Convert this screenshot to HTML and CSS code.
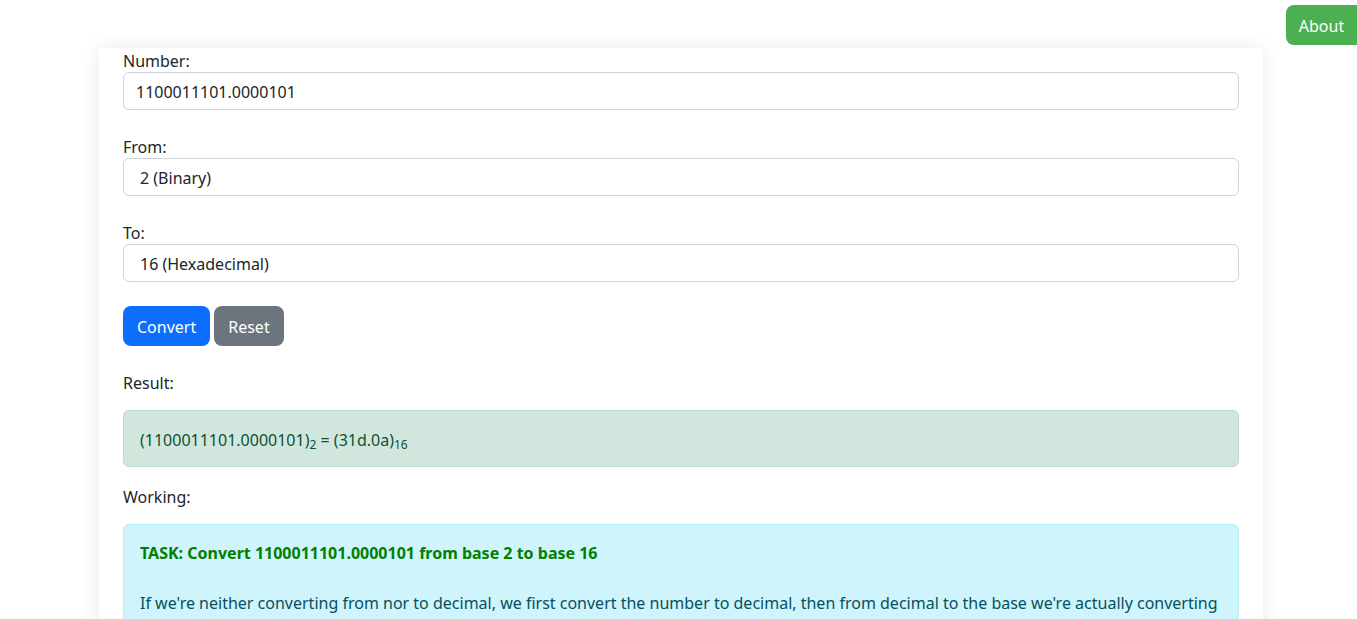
FILE: index.html
```html
<!DOCTYPE html>
<html lang="en">
<head>
<meta charset="utf-8">
<title>Base Converter</title>
<link rel="stylesheet" href="styles.css">
</head>
<body>
<header class="topbar">
  <button class="about-btn" type="button">About</button>
</header>
<main class="card">
  <div class="field">
    <label class="field-label" for="number">Number:</label>
    <input class="control" id="number" type="text" value="1100011101.0000101">
  </div>
  <div class="field">
    <label class="field-label" for="from">From:</label>
    <select class="control select" id="from">
      <option>2 (Binary)</option>
    </select>
  </div>
  <div class="field">
    <label class="field-label" for="to">To:</label>
    <select class="control select" id="to">
      <option>16 (Hexadecimal)</option>
    </select>
  </div>
  <div class="actions">
    <button class="btn btn-primary" type="button">Convert</button>
    <button class="btn btn-secondary" type="button">Reset</button>
  </div>
  <div class="section-label">Result:</div>
  <div class="alert alert-success">(1100011101.0000101)<sub>2</sub> = (31d.0a)<sub>16</sub></div>
  <div class="section-label">Working:</div>
  <div class="alert alert-info">
    <p class="task">TASK: Convert 1100011101.0000101 from base 2 to base 16</p>
    <p class="explain">If we're neither converting from nor to decimal, we first convert the number to decimal, then from decimal to the base we're actually converting to.</p>
  </div>
</main>
</body>
</html>
```

FILE: styles.css
```css
* { box-sizing: border-box; }

html, body {
  margin: 0;
  padding: 0;
  background: #ffffff;
  overflow: hidden;
}

body {
  font-family: "Noto Sans", "Open Sans", sans-serif;
  font-size: 16px;
  line-height: 24px;
  color: #212529;
}

.topbar {
  display: flex;
  justify-content: flex-end;
  padding-top: 5px;
}

.about-btn {
  height: 40px;
  width: 71px;
  border: none;
  border-radius: 8px 0 0 8px;
  background: #4caf50;
  color: #ffffff;
  font-family: inherit;
  font-size: 16px;
  line-height: 24px;
  padding: 2px 0 0;
}

.card {
  width: 1164px;
  margin: 3px 0 0 99px;
  padding: 0 24px 24px;
  background: #ffffff;
  box-shadow: 0 0 18px rgba(0, 0, 0, 0.09);
  min-height: 600px;
}

.field {
  display: flex;
  flex-direction: column;
  margin-bottom: 24px;
}

.field-label {
  display: block;
  height: 24px;
  padding-top: 1px;
}

.control {
  display: block;
  width: 100%;
  height: 38px;
  padding: 7px 12px 5px;
  border: 1px solid #ced4da;
  border-radius: 6px;
  background: #ffffff;
  font-family: inherit;
  font-size: 16px;
  line-height: 24px;
  color: #212529;
}

.select {
  appearance: none;
  -webkit-appearance: none;
  padding-left: 16px;
}

.actions {
  display: flex;
  gap: 4px;
  margin-bottom: 25px;
}

.btn {
  height: 40px;
  padding: 9px 14px 7px;
  border: none;
  border-radius: 8px;
  color: #ffffff;
  font-family: inherit;
  font-size: 16px;
  line-height: 24px;
}

.btn-primary { background: #0d6efd; }
.btn-secondary { background: #6c757d; }

.section-label {
  line-height: 24px;
  margin-bottom: 15px;
}

.alert {
  border: 1px solid;
  border-radius: 6px;
  padding: 16px;
  margin-bottom: 18px;
}

.alert-success {
  background: #d1e7dd;
  border-color: #badbcc;
  color: #0f5132;
  height: 57px;
  padding-top: 17px;
}

.alert-success sub {
  font-size: 12px;
  line-height: 0;
  vertical-align: -3px;
}

.alert-info {
  background: #cff4fc;
  border-color: #b6effb;
  color: #055160;
}

.task {
  margin: 0 0 26px;
  font-weight: 700;
  color: #008000;
}

.explain {
  margin: 0;
}
```
